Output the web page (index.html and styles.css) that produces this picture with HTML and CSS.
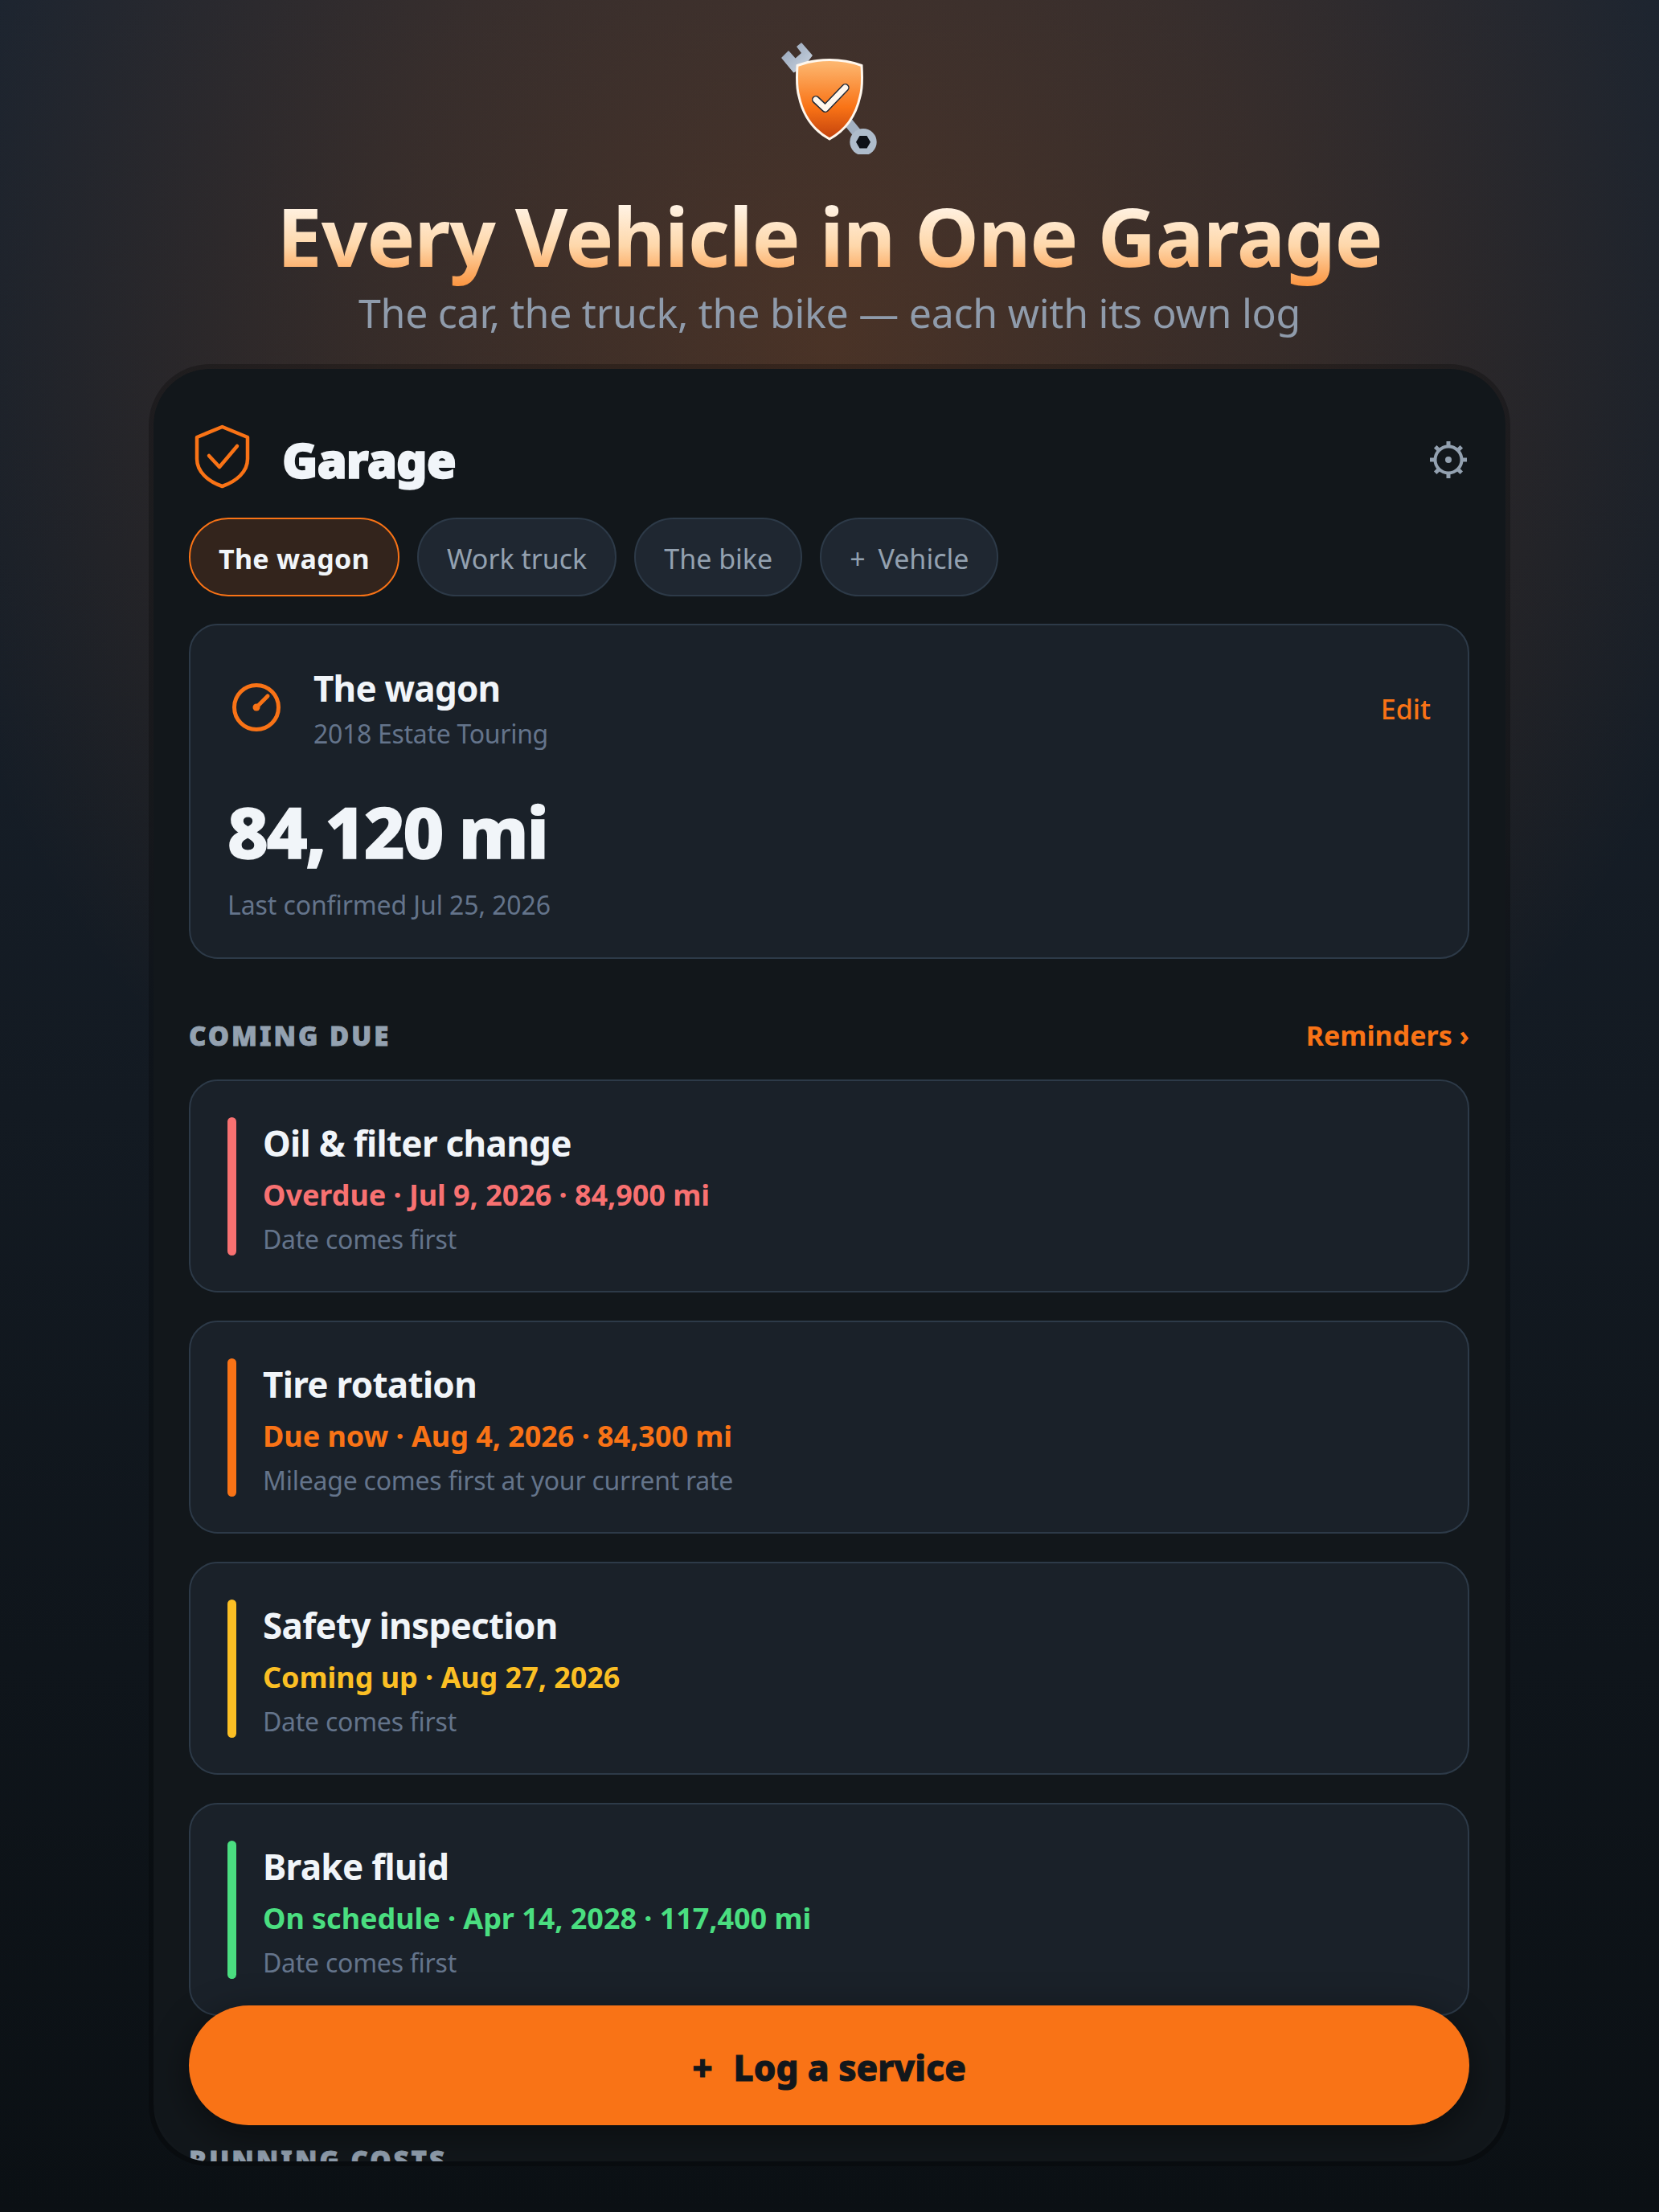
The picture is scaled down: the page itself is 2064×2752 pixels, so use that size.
FILE: index.html
```html
<!DOCTYPE html>
<html lang="en">
<head>
  <meta charset="UTF-8" />
  <title>Every Vehicle in One Garage</title>
  <link rel="stylesheet" href="styles.css">
</head>
<body>
  <header class="hero">
    <svg class="hero-icon" viewBox="0 0 144 144" width="144" height="144">
      <defs>
        <linearGradient id="steel" x1="0" y1="0" x2="1" y2="1">
          <stop offset="0" stop-color="#94a3b8"/>
          <stop offset="1" stop-color="#cbd5e1"/>
        </linearGradient>
        <linearGradient id="shield" x1="0" y1="0" x2="0" y2="1">
          <stop offset="0" stop-color="#fdba74"/>
          <stop offset="0.6" stop-color="#f97316"/>
          <stop offset="1" stop-color="#c2410c"/>
        </linearGradient>
      </defs>
      <path d="M36 32 L110 122" stroke="#a3b1c2" stroke-width="12" fill="none"/>
      <path d="M13 24 L21 16 L29.5 25.5 L38 18 L32 10 L37 6 L50 21 L40 34 L27.5 41.5 Z" fill="url(#steel)" stroke="url(#steel)" stroke-width="1.5" stroke-linejoin="round"/>
      <circle cx="114" cy="128.7" r="16.7" fill="#aebccb"/>
      <path d="M123 128.7 L118.5 136.5 L109.5 136.5 L105 128.7 L109.5 120.9 L118.5 120.9 Z" fill="#0d1117"/>
      <path d="M72 26.5 C86 26.5 100 29 112 33.5 C113 50 113 62 110 72 C105 95 92 114 72 125 C52 114 39 95 34 72 C31 62 31 50 32 33.5 C44 29 58 26.5 72 26.5 Z" fill="url(#shield)" stroke="#fff7ed" stroke-width="3"/>
      <path d="M55 76 L66.7 87 L91.7 61" fill="none" stroke="#1f2937" stroke-width="10" stroke-linecap="round" stroke-linejoin="round"/>
      <path d="M55 76 L66.7 87 L91.7 61" fill="none" stroke="#fff7ed" stroke-width="7" stroke-linecap="round" stroke-linejoin="round"/>
    </svg>
    <h1 class="hero-title">Every Vehicle in One Garage</h1>
    <p class="hero-sub">The car, the truck, the bike — each with its own log</p>
  </header>

  <main class="frame">
    <div class="topbar">
      <svg class="brand-icon" viewBox="0 0 72 82" width="72" height="82" fill="none" stroke="#f97316" stroke-width="4.5" stroke-linejoin="round" stroke-linecap="round">
        <path d="M35.5 4 L67 17 V44 C67 60 53 72 35.5 78 C18 72 4 60 4 44 V17 Z"/>
        <path d="M19 40 L32 54 L54 28"/>
      </svg>
      <h2 class="brand-name">Garage</h2>
      <svg class="gear" viewBox="0 0 46 46" width="46" height="46" fill="none" stroke="#93a1b0">
        <circle cx="23" cy="23" r="16.5" stroke-width="4"/>
        <circle cx="23" cy="23" r="4" fill="#93a1b0" stroke="none"/>
        <path stroke-width="5" d="M23 0V7M23 39V46M0 23H7M39 23H46M6.7 6.7L11.5 11.5M34.5 34.5L39.3 39.3M6.7 39.3L11.5 34.5M34.5 11.5L39.3 6.7"/>
      </svg>
    </div>

    <nav class="tabs">
      <span class="tab tab-active">The wagon</span>
      <span class="tab">Work truck</span>
      <span class="tab">The bike</span>
      <span class="tab tab-add">+ Vehicle</span>
    </nav>

    <section class="card vehicle">
      <div class="vehicle-head">
        <svg class="gauge" viewBox="0 0 72 72" width="72" height="72" fill="none" stroke="#f97316" stroke-width="5" stroke-linecap="round">
          <circle cx="36" cy="36" r="27.5"/>
          <path d="M36 36 L50 22"/>
          <circle cx="36" cy="36" r="4.5" fill="#f97316" stroke="none"/>
        </svg>
        <div class="vehicle-name">
          <div class="vehicle-title">The wagon</div>
          <div class="vehicle-model">2018 Estate Touring</div>
        </div>
        <a class="edit">Edit</a>
      </div>
      <div class="mileage">84,120 mi</div>
      <div class="confirmed">Last confirmed Jul 25, 2026</div>
    </section>

    <div class="section-head">
      <span class="section-label">COMING DUE</span>
      <a class="section-link">Reminders ›</a>
    </div>

    <section class="due-list">
      <article class="card due">
        <span class="bar bar-red"></span>
        <div class="due-text">
          <div class="due-title">Oil &amp; filter change</div>
          <div class="due-status text-red">Overdue · Jul 9, 2026 · 84,900 mi</div>
          <div class="due-note">Date comes first</div>
        </div>
      </article>
      <article class="card due">
        <span class="bar bar-orange"></span>
        <div class="due-text">
          <div class="due-title">Tire rotation</div>
          <div class="due-status text-orange">Due now · Aug 4, 2026 · 84,300 mi</div>
          <div class="due-note">Mileage comes first at your current rate</div>
        </div>
      </article>
      <article class="card due">
        <span class="bar bar-yellow"></span>
        <div class="due-text">
          <div class="due-title">Safety inspection</div>
          <div class="due-status text-yellow">Coming up · Aug 27, 2026</div>
          <div class="due-note">Date comes first</div>
        </div>
      </article>
      <article class="card due">
        <span class="bar bar-green"></span>
        <div class="due-text">
          <div class="due-title">Brake fluid</div>
          <div class="due-status text-green">On schedule · Apr 14, 2028 · 117,400 mi</div>
          <div class="due-note">Date comes first</div>
        </div>
      </article>
    </section>

    <div class="section-head section-costs">
      <span class="section-label">RUNNING COSTS</span>
    </div>

    <button class="log-btn"><span class="plus">+</span>Log a service</button>
  </main>
</body>
</html>
```

FILE: styles.css
```css
* {
  box-sizing: border-box;
}

html, body {
  margin: 0;
  height: 2752px;
}

body {
  overflow: hidden;
  font-family: "Noto Sans", sans-serif;
  background:
    radial-gradient(ellipse 1150px 1250px at 50% 430px, rgba(249, 115, 22, 0.22) 0%, rgba(249, 115, 22, 0.13) 50%, rgba(249, 115, 22, 0) 100%),
    linear-gradient(180deg, #1b2430 0%, #0b1014 100%);
  color: #f1f5f9;
}

.hero {
  height: 453px;
  padding-top: 48px;
  display: flex;
  flex-direction: column;
  align-items: center;
}

.hero-icon {
  display: block;
}

.hero-title {
  margin: 36px 0 0;
  font-size: 101px;
  line-height: 130px;
  letter-spacing: -1.2px;
  font-weight: 700;
  background: linear-gradient(180deg, #fff7ed 15%, #fed7aa 60%, #fb923c 100%);
  -webkit-background-clip: text;
  background-clip: text;
  color: transparent;
}

.hero-sub {
  margin: 1px 0 0;
  font-size: 50px;
  line-height: 60px;
  letter-spacing: -0.25px;
  color: #8f9bab;
}

.frame {
  position: relative;
  width: 1694px;
  height: 2242px;
  margin: 0 auto;
  padding: 46px 45px 0 44px;
  background: #12171b padding-box;
  border: 6px solid rgba(0, 0, 0, 0.25);
  border-radius: 76px;
  overflow: hidden;
}

.topbar {
  display: flex;
  align-items: center;
  height: 134px;
  padding: 0 3px 0 6px;
}

.brand-icon {
  margin-bottom: 8px;
}

.brand-name {
  margin: 0 0 0 38px;
  font-size: 60px;
  line-height: 80px;
  letter-spacing: -1px;
  font-weight: 900;
  -webkit-text-stroke: 1.5px #f1f5f9;
  color: #f1f5f9;
}

.gear {
  margin-left: auto;
}

.tabs {
  display: flex;
  gap: 22px;
  margin-top: 5px;
}

.tab {
  height: 98px;
  padding: 3px 35px 0;
  display: flex;
  align-items: center;
  font-size: 34px;
  color: #93a1b0;
  background: #1f2731;
  border: 2px solid #2d3a48;
  border-radius: 49px;
}

.tab-add {
  word-spacing: 7px;
}

.tab-active {
  font-weight: 700;
  letter-spacing: 0.3px;
  color: #f1f5f9;
  background: #33241c;
  border-color: #f97316;
}

.card {
  background: #1a2129;
  border: 2px solid #2d3a48;
  border-radius: 36px;
}

.vehicle {
  height: 417px;
  margin-top: 34px;
  padding: 48px 46px 0;
}

.vehicle-head {
  display: flex;
  align-items: center;
}

.gauge {
  margin-bottom: 6px;
}

.vehicle-name {
  margin-left: 35px;
}

.vehicle-title {
  font-size: 44px;
  line-height: 60px;
  letter-spacing: -0.8px;
  font-weight: 700;
  color: #f1f5f9;
}

.vehicle-model {
  font-size: 32px;
  line-height: 52px;
  letter-spacing: -0.3px;
  margin-top: 1px;
  color: #64748b;
}

.edit {
  margin-left: auto;
  margin-bottom: 2px;
  font-size: 34px;
  font-weight: 500;
  color: #f97316;
}

.mileage {
  margin-top: 40px;
  font-size: 88px;
  line-height: 110px;
  letter-spacing: -2.2px;
  font-weight: 800;
  -webkit-text-stroke: 1.5px #f1f5f9;
  color: #f1f5f9;
}

.confirmed {
  margin-top: 11px;
  font-size: 32px;
  line-height: 52px;
  letter-spacing: -0.1px;
  color: #64748b;
}

.section-head {
  display: flex;
  justify-content: space-between;
  align-items: center;
  height: 52px;
  margin-top: 69px;
}

.section-label {
  font-size: 33px;
  font-weight: 900;
  letter-spacing: 3px;
  -webkit-text-stroke: 0.8px #93a1b0;
  color: #93a1b0;
}

.section-link {
  font-size: 34px;
  font-weight: 700;
  color: #f97316;
}

.due-list {
  display: flex;
  flex-direction: column;
  gap: 35px;
  margin-top: 29px;
}

.due {
  display: flex;
  gap: 33px;
  height: 265px;
  padding: 45px 46px 44px;
}

.bar {
  flex: none;
  width: 11px;
  border-radius: 6px;
}

.due-text {
  margin-top: 2px;
}

.due-title {
  font-size: 44px;
  line-height: 60px;
  letter-spacing: -0.7px;
  font-weight: 700;
  color: #f1f5f9;
}

.due-status {
  font-size: 36px;
  line-height: 52px;
  margin-top: 9px;
  letter-spacing: -0.05px;
  font-weight: 700;
}

.due-note {
  font-size: 32px;
  line-height: 52px;
  letter-spacing: -0.25px;
  margin-top: 3px;
  color: #64748b;
}

.bar-red { background: #f87171; }
.bar-orange { background: #f97316; }
.bar-yellow { background: #fbbf24; }
.bar-green { background: #4ade80; }

.text-red { color: #f87171; }
.text-orange { color: #f97316; }
.text-yellow { color: #fbbf24; }
.text-green { color: #4ade80; }

.section-costs {
  margin-top: 153px;
}

.log-btn {
  position: absolute;
  left: 44px;
  right: 45px;
  bottom: 45px;
  height: 149px;
  padding-top: 6px;
  border: 0;
  border-radius: 75px;
  background: #f97316;
  box-shadow: 0 12px 48px rgba(0, 0, 0, 0.45);
  font-family: inherit;
  font-size: 44px;
  font-weight: 800;
  -webkit-text-stroke: 1px #12171b;
  color: #12171b;
}

.plus {
  margin-right: 26px;
}
```
